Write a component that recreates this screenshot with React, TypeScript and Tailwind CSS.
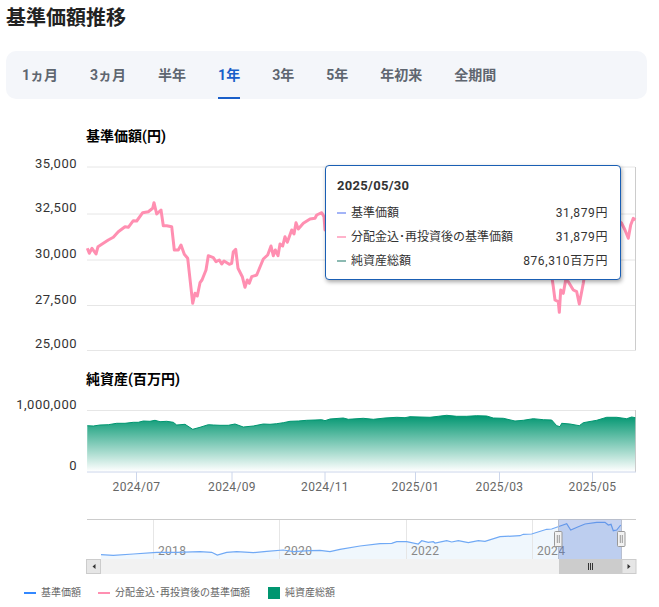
import React from "react";

// chart points are [x, y] in page pixels, relative to the chart svg (top = 120)
const TOP = 120;
const z = (ox: number, oy: number, pts: number[][]) =>
  pts.map(([x, y]) => [ox + x / 3, oy + y / 3 - TOP]);
const toPath = (pts: number[][]) =>
  pts.map(([x, y], i) => `${i ? "L" : "M"}${x.toFixed(1)} ${y.toFixed(1)}`).join(" ");

const pink = [
  ...z(0, 160, [
    [262, 265], [268, 280], [276, 265], [288, 282], [294, 260], [310, 250], [325, 240], [340, 232], [355, 215],
    [375, 200], [385, 202], [400, 182], [410, 183], [428, 158], [445, 155], [458, 145], [462, 128], [470, 162],
    [483, 150], [490, 197], [500, 197], [515, 200], [523, 270], [535, 270], [543, 255], [553, 283], [563, 295],
    [578, 430], [585, 400], [592, 408], [600, 368], [606, 360], [618, 330], [625, 287], [640, 293], [648, 305],
    [658, 300], [665, 312], [672, 303], [688, 313], [695, 310], [700, 275], [707, 268], [714, 325], [727, 350],
    [735, 382], [742, 360], [748, 370], [755, 350], [770, 345], [790, 297], [803, 285], [813, 258], [820, 287],
    [826, 270], [834, 287], [840, 252], [848, 258], [855, 230], [862, 247], [875, 210], [882, 222], [888, 188],
    [895, 207], [910, 190], [930, 177], [945, 175], [950, 165], [965, 158], [972, 170], [975, 210],
  ]),
  ...z(320, 150, [
    [690, 300], [697, 390], [700, 410], [705, 450], [715, 455], [718, 487], [722, 420], [730, 430], [737, 390],
    [745, 395], [760, 420], [770, 425], [778, 462], [790, 400], [800, 330], [880, 200], [905, 220], [915, 240],
    [925, 265], [932, 225], [940, 205], [946, 210],
  ]),
];

const green = [
  ...z(0, 360, [
    [262, 197], [280, 198], [300, 195], [325, 194], [350, 190], [375, 190], [400, 187], [415, 187], [430, 183], [450, 184], [465, 181], [480, 185], [500, 184], [520, 187], [530, 195],
    [555, 193], [578, 208], [600, 202], [625, 194], [640, 195], [660, 196], [685, 196], [705, 192], [730, 201], [760, 198], [790, 192],
    [810, 193], [830, 191], [850, 188], [870, 184], [895, 183], [920, 181], [945, 180], [965, 179], [975, 182],
  ]),
  ...z(330, 360, [
    [0, 177], [40, 174], [55, 178], [100, 175], [130, 178], [165, 174], [200, 172], [225, 173], [240, 170], [270, 171], [300, 172],
    [325, 169], [350, 166], [380, 169], [410, 169], [440, 167], [470, 168], [490, 174], [520, 175], [555, 183], [580, 181], [610, 176], [640, 179], [665, 180],
    [680, 197], [690, 200], [695, 190], [720, 192], [748, 197], [760, 188], [800, 181], [830, 172], [860, 172],
    [890, 176], [905, 171], [916, 173],
  ]),
];

const nav = [
  ...z(0, 500, [
    [303, 164], [340, 166], [400, 162], [470, 157], [530, 157], [600, 155], [635, 157], [652, 165], [680, 157],
    [710, 155], [760, 158], [800, 154], [850, 150], [880, 155], [930, 152], [960, 151],
  ]),
  ...z(330, 500, [
    [0, 155], [30, 148], [90, 138], [150, 131], [185, 130], [200, 125], [230, 125], [265, 132], [275, 122],
    [295, 127], [310, 125], [315, 129], [350, 122], [365, 126], [385, 122], [415, 128], [445, 122], [465, 124],
    [510, 110], [570, 107], [580, 103], [605, 102], [650, 88], [665, 87], [710, 71], [722, 90], [745, 80],
    [765, 72], [800, 67], [825, 67], [835, 75], [843, 73], [850, 92], [860, 90], [872, 75],
  ]),
];

const tabs = ["1ヵ月", "3ヵ月", "半年", "1年", "3年", "5年", "年初来", "全期間"];

const tooltipRows = [
  { color: "bg-[#a3b4f7]", label: "基準価額", value: "31,879円" },
  { color: "bg-[#ffb3cb]", label: "分配金込･再投資後の基準価額", value: "31,879円" },
  { color: "bg-[#8cbab2]", label: "純資産総額", value: "876,310百万円" },
];

const priceTicks = [
  { y: 167, labelY: 167.5, label: "35,000" },
  { y: 214, labelY: 211.5, label: "32,500" },
  { y: 260, labelY: 257.5, label: "30,000" },
  { y: 305.5, labelY: 303.5, label: "27,500" },
  { y: 350.5, labelY: 347.5, label: "25,000" },
];

const dateTicks = [
  { x: 136.5, label: "2024/07" },
  { x: 232, label: "2024/09" },
  { x: 325, label: "2024/11" },
  { x: 415.5, label: "2025/01" },
  { x: 499.5, label: "2025/03" },
  { x: 592.5, label: "2025/05" },
];

const navTicks = [
  { x: 153.5, label: "2018" },
  { x: 279.5, label: "2020" },
  { x: 406.5, label: "2022" },
  { x: 532.5, label: "2024" },
];

function NavHandle({ x }: { x: number }) {
  return (
    <g>
      <rect x={x} y={411.5} width={7.5} height={15} rx={1} fill="#f2f2f2" stroke="#999" />
      <path d={`M${x + 2.8} 415 v8 M${x + 4.8} 415 v8`} stroke="#999" />
    </g>
  );
}

function Chart() {
  return (
    <svg width={659} height={458} className="block" fontFamily="Roboto, 'Noto Sans CJK JP', sans-serif">
      <defs>
        <linearGradient id="navFill" x1="0" y1="0" x2="0" y2="1">
          <stop offset="0" stopColor="#009670" />
          <stop offset="1" stopColor="#009670" stopOpacity="0" />
        </linearGradient>
      </defs>

      <text x={86} y={21} fontSize={14} fontWeight={700} fill="#000">基準価額(円)</text>
      {priceTicks.map((t) => (
        <g key={t.label}>
          <line x1={87} x2={635} y1={t.y - TOP} y2={t.y - TOP} stroke="#e6e6e6" />
          <text x={77} y={t.labelY - TOP} textAnchor="end" fontSize={13} letterSpacing={0.5} fill="#333">{t.label}</text>
        </g>
      ))}
      <line x1={635.5} x2={635.5} y1={47} y2={230.5} stroke="#ccc" />
      <path d={toPath(pink)} fill="none" stroke="#ff8fb1" strokeWidth={3} strokeLinejoin="round" />

      <text x={86} y={264} fontSize={14} fontWeight={700} fill="#000">純資産(百万円)</text>
      <line x1={87} x2={635} y1={290.5} y2={290.5} stroke="#e6e6e6" />
      <line x1={635.5} x2={635.5} y1={290} y2={352} stroke="#ccc" />
      <text x={77} y={289} textAnchor="end" fontSize={13} letterSpacing={0.5} fill="#333">1,000,000</text>
      <text x={77} y={350} textAnchor="end" fontSize={13} letterSpacing={0.5} fill="#333">0</text>
      <path d={`${toPath(green)} L635 351.5 L87 351.5 Z`} fill="url(#navFill)" />
      <path d={toPath(green)} fill="none" stroke="#009670" strokeWidth={1} />
      <line x1={87} x2={636} y1={352} y2={352} stroke="#ccd6eb" />
      {dateTicks.map((t) => (
        <g key={t.label}>
          <line x1={t.x} x2={t.x} y1={352} y2={362} stroke="#ccd6eb" />
          <text x={t.x} y={371} textAnchor="middle" fontSize={12} letterSpacing={0.35} fill="#666">{t.label}</text>
        </g>
      ))}

      {/* navigator */}
      <path d={`${toPath(nav)} L621 439 L101 439 Z`} fill="#f0f7fd" />
      {navTicks.map((t) => (
        <g key={t.label}>
          <line x1={t.x} x2={t.x} y1={399} y2={439} stroke="#e6e6e6" />
          <text x={t.x + 4.5} y={435} fontSize={12} letterSpacing={0.3} fill="#888">{t.label}</text>
        </g>
      ))}
      <path d={toPath(nav)} fill="none" stroke="#70a9f5" strokeWidth={1.2} />
      <line x1={87} x2={636} y1={399.5} y2={399.5} stroke="#ccc" />
      <rect x={558.5} y={399.5} width={63} height={40} fill="#4a6fd0" fillOpacity={0.3} />
      <line x1={558.5} x2={558.5} y1={400} y2={439} stroke="#b8bfd0" />
      <line x1={621.5} x2={621.5} y1={400} y2={439} stroke="#b8bfd0" />

      <rect x={87} y={439} width={549} height={15} fill="#f2f2f2" />
      <rect x={86.5} y={439.5} width={14} height={14} fill="#e6e6e6" stroke="#ccc" />
      <path d="M95.5 444 l-3 2.5 l3 2.5 Z" fill="#333" />
      <rect x={559} y={439} width={63} height={15} fill="#ccc" />
      <path d="M588.5 443 v7 M590.5 443 v7 M592.5 443 v7" stroke="#333" />
      <rect x={622} y={439.5} width={14} height={14} fill="#e6e6e6" stroke="#ccc" />
      <path d="M627.5 444 l3 2.5 l-3 2.5 Z" fill="#333" />
      <NavHandle x={554.5} />
      <NavHandle x={617.5} />
    </svg>
  );
}

function ChartTooltip() {
  return (
    <div className="absolute left-[325px] top-[45px] w-[296px] h-[115px] rounded-[4px] border border-[#1a5fb4] bg-white shadow-[1px_2px_4px_rgba(0,0,0,0.35)] pl-[11px] pr-[12px] pt-[11px] text-[12px] text-[#333]">
      <p className="font-bold text-[13px] leading-[18px] tracking-[0.3px] mb-[6px]">2025/05/30</p>
      {tooltipRows.map((row) => (
        <div key={row.label} className="flex items-center h-[24px]">
          <span className={`w-[9px] h-[2px] mr-[5px] ${row.color}`} />
          <span className="flex-1">{row.label}</span>
          <span className="tracking-[0.6px]">{row.value}</span>
        </div>
      ))}
    </div>
  );
}

export default function App() {
  return (
    <div className="w-[659px] h-[607px] overflow-hidden bg-white font-['Roboto','Noto_Sans_CJK_JP',sans-serif]">
      <h1 className="pl-[6px] pt-[4px] text-[20px] leading-[28px] font-bold text-[#222]">基準価額推移</h1>

      <div className="ml-[6px] mr-[12px] mt-[19px] h-[48px] rounded-[10px] bg-[#f4f6fa] flex items-stretch px-[16px] gap-[32px]">
        {tabs.map((tab) => (
          <div
            key={tab}
            className={`flex items-center text-[14px] font-bold border-t-2 border-t-transparent border-b-2 ${
              tab === "1年" ? "text-[#1a5fc9] border-b-[#1a5fc9]" : "text-[#5f6670] border-b-transparent"
            }`}
          >
            {tab}
          </div>
        ))}
      </div>

      <div className="relative mt-[21px]">
        <Chart />
        <ChartTooltip />
      </div>

      <div className="flex items-center h-[14px] mt-[8px] pl-[24px] text-[10px] leading-none text-[#666]">
        <span className="w-[12px] h-[2px] bg-[#3388ff] mr-[5px]" />
        <span className="mr-[17px]">基準価額</span>
        <span className="w-[12px] h-[2px] bg-[#ff8fb1] mr-[5px]" />
        <span className="mr-[18px]">分配金込･再投資後の基準価額</span>
        <span className="w-[12px] h-[12px] bg-[#009670] mr-[5px]" />
        <span>純資産総額</span>
      </div>
    </div>
  );
}
